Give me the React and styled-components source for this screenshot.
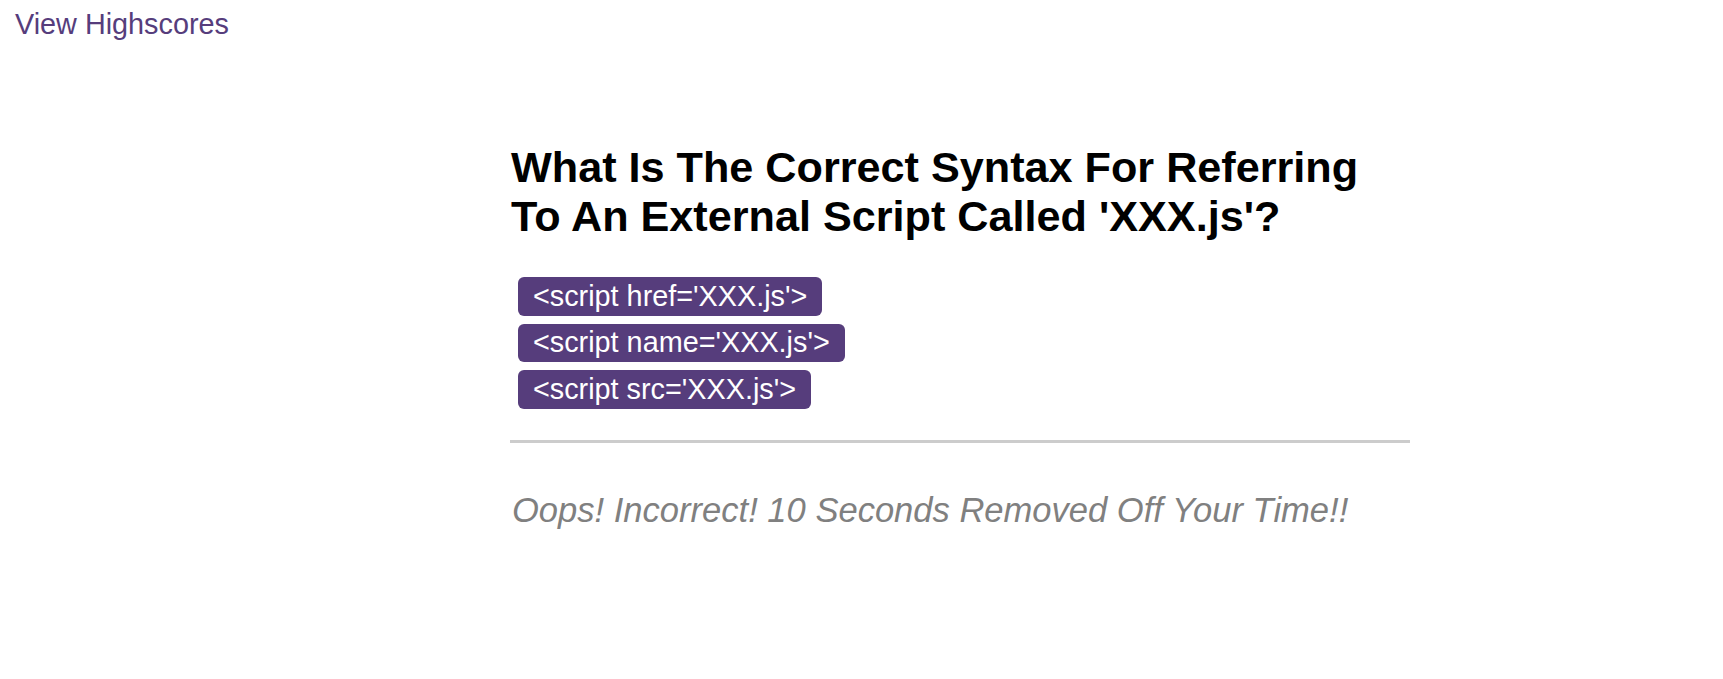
import React from "react";
import styled, { createGlobalStyle } from "styled-components";

const GlobalStyle = createGlobalStyle`
  html, body { margin: 0; padding: 0; background: #ffffff; }
  body { font-family: "Liberation Sans", Arial, sans-serif; }
`;

const Page = styled.div`
  position: relative;
  min-height: 679px;
  padding: 7.5px 0 0 15px;
  box-sizing: border-box;
`;

const HighscoreLink = styled.a`
  display: inline-block;
  font-size: 28.8px;
  line-height: 1.149;
  color: #563d7c;
  text-decoration: none;
  cursor: pointer;
`;

const Quiz = styled.main`
  width: 900px;
  margin: 102px 0 0 495px;
  display: flex;
  flex-direction: column;
`;

const Question = styled.h2`
  margin: 0 0 0 1px;
  font-size: 43.2px;
  line-height: 1.149;
  font-weight: 700;
  color: #000000;
`;

const Choices = styled.ol`
  list-style: none;
  margin: 35.5px 0 0 8px;
  padding: 0;
  display: flex;
  flex-direction: column;
  align-items: flex-start;
  gap: 8px;
`;

const Choice = styled.button`
  font-family: "Liberation Sans", Arial, sans-serif;
  font-size: 28.8px;
  line-height: 1.149;
  color: #ffffff;
  background: #563d7c;
  border: none;
  border-radius: 6px;
  padding: 2.7px 15px;
  cursor: pointer;
`;

const Divider = styled.hr`
  width: 900px;
  height: 3px;
  margin: 31px 0 0 0;
  border: none;
  background: #cccccc;
`;

const Feedback = styled.p`
  margin: 48px 0 0 2px;
  font-size: 34.56px;
  line-height: 1.149;
  font-style: italic;
  color: #808080;
`;

const choices = [
  "<script href='XXX.js'>",
  "<script name='XXX.js'>",
  "<script src='XXX.js'>",
];

export default function App() {
  return (
    <>
      <GlobalStyle />
      <Page>
        <HighscoreLink>View Highscores</HighscoreLink>
        <Quiz>
          <Question>
            What Is The Correct Syntax For Referring To An External Script
            Called 'XXX.js'?
          </Question>
          <Choices>
            {choices.map((c) => (
              <li key={c}>
                <Choice>{c}</Choice>
              </li>
            ))}
          </Choices>
          <Divider />
          <Feedback>Oops! Incorrect! 10 Seconds Removed Off Your Time!!</Feedback>
        </Quiz>
      </Page>
    </>
  );
}
